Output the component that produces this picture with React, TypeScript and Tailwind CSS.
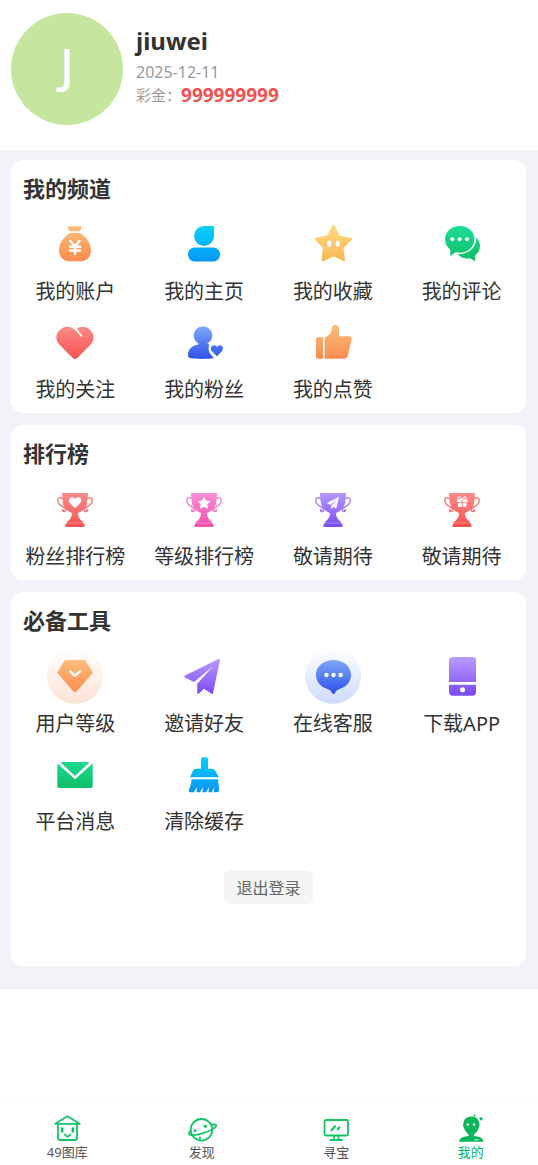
import React from "react";

type Item = { label: string; icon: React.ReactNode; glow?: string };

const gradients = [
  { id: "orange", from: "#fdc07d", to: "#fb8a4e" },
  { id: "sky", from: "#08d2fb", to: "#0596f6" },
  { id: "yellow", from: "#fddb7f", to: "#fab652" },
  { id: "green", from: "#1bdf97", to: "#0fbb63" },
  { id: "red", from: "#fd8f8d", to: "#f5504f" },
  { id: "blue", from: "#86adfd", to: "#2b50ea" },
  { id: "pink", from: "#fb93d9", to: "#f04fb0" },
  { id: "purple", from: "#b99bfe", to: "#7d4bf5" },
];

const Gradients = () => (
  <svg className="absolute size-0" aria-hidden="true">
    <defs>
      {gradients.map(({ id, from, to }) => (
        <linearGradient
          key={id}
          id={id}
          gradientUnits="userSpaceOnUse"
          x1="28"
          y1="10"
          x2="28"
          y2="46"
        >
          <stop offset="0" stopColor={from} />
          <stop offset="1" stopColor={to} />
        </linearGradient>
      ))}
    </defs>
  </svg>
);

const Icon = ({ color, children }: { color: string; children: React.ReactNode }) => (
  <svg viewBox="0 0 56 56" className="size-14" fill={`url(#${color})`} aria-hidden="true">
    {children}
  </svg>
);

const Trophy = ({ color, children }: { color: string; children: React.ReactNode }) => (
  <Icon color={color}>
    <path d="M15 12h26l-.6 8c-.5 6-4.5 10.5-9.600 12 .2 4 2.300 6.800 5.200 9v1.500h1.400V46H18.600v-3.500H20V41c2.900-2.200 5-5 5.200-9-5.100-1.500-9.100-6-9.600-12z" />
    <g fill="none" stroke={`url(#${color})`} strokeWidth="1.5" strokeLinecap="round">
      <path d="M15.500 17.500c-3-1.800-5-.5-4.700 2.500.4 3.500 3 5 6.200 6.200 2 .8 2.500 3.800.3 4.300-1.600.3-2.300-1.200-1.200-1.900" />
      <path d="M40.500 17.500c3-1.800 5-.5 4.700 2.500-.4 3.500-3 5-6.200 6.200-2 .8-2.500 3.800-.3 4.300 1.600.3 2.300-1.200 1.200-1.900" />
    </g>
    <path d="M19.500 42h17" stroke="#fff" strokeWidth=".5" opacity=".6" />
    {children}
  </Icon>
);

const channels: Item[] = [
  {
    label: "我的账户",
    icon: (
      <Icon color="orange">
        <path d="M21.500 10.500c2-.8 3.500.3 6.300-.3 2.500.5 4-.6 6.200.3 1.200.7.8 1.800.2 2.800l-1.500 1.900H23l-1.700-2c-.7-1-1-2 .2-2.700z" />
        <path d="M23 17h10c6 3.500 11 10 11 17 0 7.500-4.500 11.300-11 11.300H23c-6.500 0-11-3.800-11-11.300 0-7 5-13.500 11-17z" />
        <path
          d="M23.500 25l4.500 5.200 4.500-5.200M28 30.500V38M23 30.800h10M23 34.500h10"
          fill="none"
          stroke="#fff"
          strokeWidth="2.5"
          strokeLinecap="round"
          strokeLinejoin="round"
        />
      </Icon>
    ),
  },
  {
    label: "我的主页",
    icon: (
      <Icon color="sky">
        <path d="M28 10h9q1 0 1 1v9a10 10 0 1 1-10-10z" />
        <rect x="12" y="31.5" width="32" height="14" rx="6.5" />
      </Icon>
    ),
  },
  {
    label: "我的收藏",
    icon: (
      <Icon color="yellow">
        <path
          d="M28.500 10l5 10.800 12.300 2.200-8.700 8.500 1.700 12.500-10.300-5-10.600 5 1.300-12.500L11 23l12-2.200z"
          stroke="url(#yellow)"
          strokeWidth="2.5"
          strokeLinejoin="round"
        />
        <rect x="22.3" y="24.5" width="4" height="6.5" rx="2" fill="#fff" />
        <rect x="30.7" y="24.5" width="4" height="6.5" rx="2" fill="#fff" />
      </Icon>
    ),
  },
  {
    label: "我的评论",
    icon: (
      <Icon color="green">
        <path d="M42.200 21.500c2.500 2.500 3.800 5.300 3.800 8.500 0 4-2 7.200-4.800 9.500v5.800L36 42.300c-4.800.8-9.300-.6-12.500-4 9.500.3 19.500-6 18.700-16.800z" />
        <path d="M25.700 10c8.300 0 14.700 5.800 14.700 13.300S34 36.800 25.700 36.800c-1.500 0-2.800-.2-4-.5L16.300 40v-6.300C13 31.200 11 27.500 11 23.300 11 15.800 17.400 10 25.700 10z" />
        <circle cx="18.3" cy="23.3" r="2" fill="#fff" />
        <circle cx="25.7" cy="23.3" r="2" fill="#fff" />
        <circle cx="33" cy="23.3" r="2" fill="#fff" />
      </Icon>
    ),
  },
  {
    label: "我的关注",
    icon: (
      <Icon color="red">
        <path d="M25.800 44l-13-13c-4.600-4.600-4.600-11 0-15 4.200-4.500 10.800-4.500 15.200 0 4.400-4.500 10.800-4.500 15.200 0 4.600 4.600 4.600 10.400 0 15l-13 13c-1.500 1.400-3 1.400-4.400 0z" />
        <path
          d="M28.500 14.500l5.800 7.300"
          stroke="#fff"
          strokeWidth="1.800"
          strokeLinecap="round"
        />
        <path d="M26 11l6 6-3.500-.5z" fill="#fff" />
      </Icon>
    ),
  },
  {
    label: "我的粉丝",
    icon: (
      <Icon color="blue">
        <circle cx="27" cy="21.5" r="9.3" />
        <path d="M22 29.500h10l1.200 1.600c-1.400 4.400-.3 8.400 4.800 12.900-6 1.200-18 1.200-24 0-1.600-.6-2-1.500-2-3 0-5.500 4-9.800 10-10.300z" />
        <path d="M40.900 42.300l-5-5c-1.500-1.600-1.400-4 .1-5.200 1.600-1.400 3.600-1 4.900.7 1.300-1.700 3.300-2.100 4.900-.7 1.500 1.200 1.600 3.600.1 5.200z" />
      </Icon>
    ),
  },
  {
    label: "我的点赞",
    icon: (
      <Icon color="orange">
        <path d="M13 23.300h5v21.400h-5q-2 0-2-2V25.300q0-2 2-2z" />
        <path d="M19.700 23.300c4.500-1.500 6.800-4 7.100-9 .2-2.300 1.500-3.600 3.500-3.600 2.300 0 3.700 1.500 3.700 4v7.600h10c2 0 3.100 1.500 2.600 3.500l-3.700 15.500c-.6 2.400-1.900 3.400-4 3.400H19.700z" />
      </Icon>
    ),
  },
];

const rankings: Item[] = [
  {
    label: "粉丝排行榜",
    icon: (
      <Trophy color="red">
        <path
          d="M28 27.300l-5-5c-1.600-1.800-1.500-4.200 0-5.300 1.800-1.200 3.800-.7 5 1.200 1.200-1.900 3.200-2.400 5-1.200 1.500 1.100 1.600 3.500 0 5.300z"
          fill="#fff"
        />
      </Trophy>
    ),
  },
  {
    label: "等级排行榜",
    icon: (
      <Trophy color="pink">
        <path
          d="M28 16.500l1.700 3.500 3.900.6-2.800 2.700.7 3.900-3.500-1.800-3.500 1.800.7-3.900-2.800-2.700 3.900-.6z"
          fill="#fff"
          stroke="#fff"
          strokeLinejoin="round"
        />
      </Trophy>
    ),
  },
  {
    label: "敬请期待",
    icon: (
      <Trophy color="purple">
        <path
          d="M33.500 16.500L22.500 22l2.700 1.500zM33.500 16.500l-7 8.200V27.500l2-1.800 2.500 1.500z"
          fill="#fff"
          stroke="#fff"
          strokeWidth=".6"
        />
      </Trophy>
    ),
  },
  {
    label: "敬请期待",
    icon: (
      <Trophy color="red">
        <path
          d="M23 18.500h4.700v2.700H23zM28.700 18.500h4.700v2.700h-4.700zM24 22h3.700v4H24zM28.700 22h3.700v4h-3.700z"
          fill="#fff"
        />
        <path
          d="M28 18.300c-1.500-3-4-3.300-4-1.500 0 1.300 2 1.500 4 1.500zc1.500-3 4-3.300 4-1.500 0 1.300-2 1.500-4 1.500z"
          fill="none"
          stroke="#fff"
        />
      </Trophy>
    ),
  },
];

const tools: Item[] = [
  {
    label: "用户等级",
    glow: "from-[#fde2d5]",
    icon: (
      <Icon color="orange">
        <path
          d="M18.500 13h19l7.200 11.500L28.500 43h-1L11.300 24.500z"
          stroke="url(#orange)"
          strokeWidth="2"
          strokeLinejoin="round"
        />
        <path
          d="M23.300 23.300l4.700 4.500 4.700-4.500"
          fill="none"
          stroke="#fff"
          strokeWidth="2.5"
          strokeLinecap="round"
          strokeLinejoin="round"
        />
      </Icon>
    ),
  },
  {
    label: "邀请好友",
    icon: (
      <Icon color="purple">
        <path d="M42.500 11c1-.4 1.600 0 1.500 1l-7 33.300c-.2.900-.8 1-1.500.5l-7.500-5-5 4.600c-1 .8-1.800.4-1.800-.7v-9L37 18.300 18 34l-9-4.500c-1-.6-1-1.400 0-2z" />
      </Icon>
    ),
  },
  {
    label: "在线客服",
    glow: "from-[#cedafd]",
    icon: (
      <Icon color="blue">
        <path d="M28.500 12C38.500 12 46 18.500 46 27c0 7-5 12-11.500 14-2.200.8-3.500 1.700-4.500 4-.7 1.500-2.300 1.500-3 0-1-2.300-2.300-3.200-4.500-4C16 39 11 34 11 27c0-8.500 7.500-15 17.500-15z" />
        <circle cx="21.5" cy="27" r="2.2" fill="#fff" />
        <circle cx="28.5" cy="27" r="2.2" fill="#fff" />
        <circle cx="35.7" cy="27" r="2.2" fill="#fff" />
      </Icon>
    ),
  },
  {
    label: "下载APP",
    icon: (
      <Icon color="purple">
        <path d="M19 9h19.500q3.500 0 3.500 3.500V34H15V12.500Q15 9 19 9zM15 36.700h27V44q0 3.700-3.500 3.700H19q-4 0-4-3.700z" />
        <circle cx="28.5" cy="41.7" r="2.5" fill="#fff" />
      </Icon>
    ),
  },
  {
    label: "平台消息",
    icon: (
      <Icon color="green">
        <path d="M15 16h26q1.800 0 1 .8L28 30 14 16.800q-.8-.8 1-.8z" />
        <path d="M11 18l15.800 14.300q1.200 1 2.400 0L45 18q.7-.4.7.6V40q0 2-2 2H12.300q-2 0-2-2V18.600q0-1 .7-.6z" />
      </Icon>
    ),
  },
  {
    label: "清除缓存",
    icon: (
      <Icon color="sky">
        <path d="M26.500 11.300h4q1.500 0 1.500 1.500v9.900h4q2 0 3 1.800l4 6.800H14l3-6.800q.8-1.800 3-1.800h5v-9.900q0-1.500 1.500-1.500z" />
        <path d="M15.500 33.300H42c.3 4 1 7.500 1 10.500 0 1.700-.8 2.500-2.500 2.500h-2.800L38.500 41l-2.800 5.300h-3.200l.5-5.300-2.800 5.300h-3.700L27 41l-3 5.300h-3.500l.7-5.300-3.500 5.300H15c-2 0-2.800-1.300-1.800-3.300 1.300-2.500 2.200-6 2.300-9.700z" />
      </Icon>
    ),
  },
];

const tabs = [
  {
    label: "49图库",
    icon: (
      <>
        <path d="M15.500 2.300L3.300 9.800h24.400zM6 10v14q0 2 2 2h15q2 0 2-2V10" />
        <path d="M10.200 14.500v3M20.800 14.500v3" strokeWidth="2.5" />
        <path d="M12.800 20.500q2.700 4 5.400 0" />
      </>
    ),
  },
  {
    label: "发现",
    icon: (
      <>
        <circle cx="14.5" cy="15.8" r="10.8" />
        <path d="M3.500 17c-6 5.500 4.500 4.700 13.500 1.800 9-2.500 15.500-8 10.500-8.300h-3" />
        <circle cx="18.3" cy="12.3" r="1.2" fill="#11c566" strokeWidth="1" />
        <circle cx="8" cy="16.5" r=".6" />
        <path d="M13 23.500v1.500" />
      </>
    ),
  },
  {
    label: "寻宝",
    icon: (
      <>
        <rect x="3.5" y="6" width="23.5" height="15.5" rx="1.5" />
        <path d="M13 22v3.500M17.500 22v3.500M9.500 26H21" />
        <path d="M10.500 16.300l3.500-4M16.800 15.300l1.500-1.800" strokeWidth="2.2" />
      </>
    ),
  },
  {
    label: "我的",
    active: true,
    icon: (
      <g fill="#07b65b" stroke="none">
        <path d="M15.500 2.500c5 0 7.800 3 7.600 7.500.7.200.7 2.200-.3 3.500-.8 3-3 5.500-4.800 7v1.500c5 .5 9.300 1.500 9.300 5.700H3.300c0-4.200 4.300-5.200 9.300-5.700v-1.500c-1.800-1.500-4-4-4.800-7-1-1.300-1-3.300-.3-3.500C7.300 5.500 10.500 2.500 15.500 2.500z" />
        <path d="M25 2.300l.7 1.500 1.600.3-1.200 1.100.3 1.600-1.400-.8-1.400.8.300-1.600-1.200-1.100 1.600-.3zM18.500.3l1 1.300-1 1.200-1.200-1.200z" />
        <circle cx="11.8" cy="10.5" r="1.2" fill="#fff" />
        <circle cx="18" cy="10.500" r="1.2" fill="#fff" />
        <path d="M18.500 25.800h4" stroke="#fff" strokeWidth=".8" />
      </g>
    ),
  },
];

const Section = ({
  title,
  items,
  children,
}: {
  title: string;
  items: Item[];
  children?: React.ReactNode;
}) => (
  <section className="rounded-xl bg-white pt-3 pb-[7px]">
    <h2 className="mb-3 px-3 text-[22px] leading-8 font-bold">{title}</h2>
    <div className="grid grid-cols-4 gap-y-1.5">
      {items.map(({ label, icon, glow }, i) => (
        <a key={i} href="#" className="flex flex-col items-center gap-1">
          <span className={`rounded-full ${glow ? `bg-linear-to-t to-white ${glow}` : ""}`}>
            {icon}
          </span>
          <span className="text-xl leading-8 whitespace-nowrap">{label}</span>
        </a>
      ))}
    </div>
    {children}
  </section>
);

const App = () => {
  return (
    <div className="min-h-screen bg-white font-['Noto_Sans','Noto_Sans_CJK_SC',sans-serif] text-[#333]">
      <Gradients />
      <header className="flex gap-[13px] px-[11px] pt-[13px] pb-[25px]">
        <div className="flex size-28 items-center justify-center rounded-full bg-[#c6e59f] pb-2 text-5xl font-medium text-white">
          J
        </div>
        <div className="pt-3">
          <h1 className="text-2xl leading-8 font-bold">jiuwei</h1>
          <p className="mt-1 text-base leading-[22px] text-[#999]">2025-12-11</p>
          <p className="flex items-center text-[15px] leading-6 text-[#999]">
            彩金：
            <span className="text-[19px] font-bold text-[#ee5351]">999999999</span>
          </p>
        </div>
      </header>

      <main className="flex flex-col gap-3 bg-[#f2f3f8] pt-[10px] pr-3 pb-[23px] pl-[11px]">
        <Section title="我的频道" items={channels} />
        <Section title="排行榜" items={rankings} />
        <Section title="必备工具" items={tools}>
          <div className="flex justify-center pt-8 pb-[55px]">
            <button className="rounded-md bg-[#f5f5f5] px-3 pt-1.5 pb-1 text-base leading-6 text-[#666]">
              退出登录
            </button>
          </div>
        </Section>
      </main>

      <nav className="fixed inset-x-0 bottom-0 grid grid-cols-4 border-t border-[#fafafa] bg-white pt-[11px] pb-[3px]">
        {tabs.map(({ label, icon, active }) => (
          <a
            key={label}
            href="#"
            className={`flex flex-col items-center text-[13px] leading-5 ${
              active ? "text-[#07b65b]" : "text-[#555]"
            }`}
          >
            <svg
              viewBox="0 0 30 28"
              className="h-7 w-[30px] overflow-visible"
              fill="none"
              stroke="#11c566"
              strokeWidth="1.8"
              strokeLinecap="round"
              strokeLinejoin="round"
              aria-hidden="true"
            >
              {icon}
            </svg>
            {label}
          </a>
        ))}
      </nav>
    </div>
  );
};

export default App;
